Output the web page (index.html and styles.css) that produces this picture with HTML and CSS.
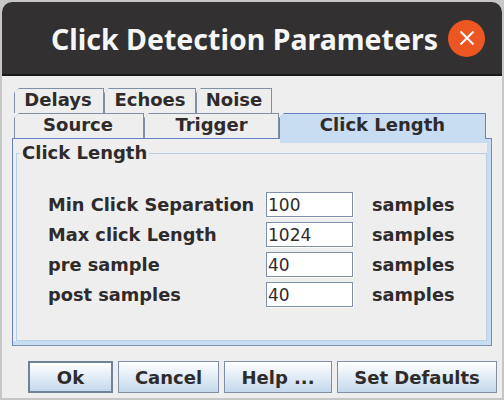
FILE: index.html
```html
<!DOCTYPE html>
<html lang="en">
<head>
    <meta charset="UTF-8">
    <title>Click Detection Parameters</title>
    <link rel="stylesheet" href="styles.css">
</head>
<body>
    <div class="window">
        <div class="titlebar">
            <h1 class="title">Click Detection Parameters</h1>
            <div class="close">
                <svg width="16" height="16" viewBox="0 0 16 16"><path d="M1.5 1.5L14.5 14.5M14.5 1.5L1.5 14.5" stroke="#fff" stroke-width="2" fill="none"/></svg>
            </div>
        </div>
        <div class="content">
            <div class="tabs">
                <div class="tab-row">
                    <div class="tab tab-delays">Delays</div>
                    <div class="tab tab-echoes">Echoes</div>
                    <div class="tab tab-noise">Noise</div>
                </div>
                <div class="tab-row">
                    <div class="tab tab-source">Source</div>
                    <div class="tab tab-trigger">Trigger</div>
                    <div class="tab tab-length selected">Click Length</div>
                </div>
            </div>
            <div class="panel">
                <fieldset class="group">
                    <legend>Click Length</legend>
                    <div class="form">
                        <label>Min Click Separation</label>
                        <input class="field" type="text" value="100">
                        <span>samples</span>
                        <label>Max click Length</label>
                        <input class="field" type="text" value="1024">
                        <span>samples</span>
                        <label>pre sample</label>
                        <input class="field" type="text" value="40">
                        <span>samples</span>
                        <label>post samples</label>
                        <input class="field" type="text" value="40">
                        <span>samples</span>
                    </div>
                </fieldset>
            </div>
            <div class="buttons">
                <button class="btn btn-ok">Ok</button>
                <button class="btn btn-cancel">Cancel</button>
                <button class="btn btn-help">Help ...</button>
                <button class="btn btn-defaults">Set Defaults</button>
            </div>
        </div>
    </div>
</body>
</html>
```
FILE: styles.css
```css
* { box-sizing: border-box; }
html, body { height: 100%; }
body {
    margin: 0;
    padding: 2px;
    background: #c6c6c6;
    font-family: "DejaVu Sans", sans-serif;
    font-weight: bold;
    font-size: 18px;
    color: #2f2b2b;
    overflow: hidden;
}
.window { height: 396px; display: flex; flex-direction: column; background: #eee; border-radius: 10px 10px 0 0; overflow: hidden; }
.titlebar {
    height: 74px;
    flex: none;
    background: #323030;
    border-bottom: 2px solid #1a1818;
    display: flex;
    align-items: center;
    padding: 0 17px 0 49px;
    justify-content: space-between;
}
.title { margin: 2px 0 0; font-family: "Noto Sans", sans-serif; font-size: 28.5px; font-weight: bold; color: #f6f6f6; white-space: nowrap; }
.close { width: 37px; height: 37px; border-radius: 50%; background: #ec5622; display: flex; align-items: center; justify-content: center; }
.content { flex: 1; padding: 12px 10px 0; }
.tabs { padding-left: 2px; }
.tab-row { display: flex; height: 25px; }
.tab {
    position: relative;
    border: 1px solid #7f8fa5;
    border-bottom: none;
    text-align: center;
    line-height: 22px;
    background: #eee;
    clip-path: polygon(5px 0, 100% 0, 100% 100%, 0 100%, 0 5px);
}
.tab::before {
    content: "";
    position: absolute;
    left: -3px;
    top: 1px;
    width: 7px;
    height: 1px;
    background: #7f8fa5;
    transform: rotate(-45deg);
}
.tab-delays { width: 90px; padding-right: 2px; }
.tab-echoes { width: 92px; }
.tab-noise { width: 76px; }
.tab-source { width: 130px; padding-right: 2px; }
.tab-trigger { width: 135px; }
.tab-length { width: 207px; }
.tab.selected { background: #c8ddf2; border-color: #6382bf; height: 26px; z-index: 1; }
.tab.selected::before { background: #6382bf; }
.panel {
    height: 208px;
    border: 1px solid #6382bf;
    border-right-color: #7f8fa5;
    border-bottom-color: #7f8fa5;
    background: #eee linear-gradient(#c8ddf2, #c8ddf2) no-repeat right top / 211px 4px;
    box-shadow: inset -4px -4px 0 #c8ddf2;
    padding: 4px 4px 4px 3px;
}
.group { height: 100%; margin: 0; padding: 0; border: 1px solid #b8cfe6; background: #eee; }
.group legend { margin-left: 3px; padding: 0 2px; line-height: 20px; }
.form {
    display: grid;
    grid-template-columns: 218px 88px auto;
    row-gap: 5px;
    align-items: center;
    padding: 29px 0 0 31px;
    font-size: 17.8px;
}
.form span { padding-left: 18px; }
.field {
    width: 87px;
    height: 25px;
    border: 1px solid #7f8fa5;
    box-shadow: 1px 1px 0 #fff;
    background: #fff;
    font: 17px "DejaVu Sans", sans-serif;
    color: #2f2b2b;
    padding: 0 1px;
}
.buttons { display: flex; gap: 5px; padding: 15px 0 0 16px; }
.btn {
    flex: none;
    height: 32px;
    border: 1px solid #7f8fa5;
    background: linear-gradient(#fff, #c4d8ec);
    font: inherit;
    color: inherit;
    padding: 0;
}
.btn-ok { width: 85px; border-width: 2px; border-color: #6f8296; }
.btn-cancel { width: 101px; }
.btn-help { width: 108px; }
.btn-defaults { width: 160px; }
```
